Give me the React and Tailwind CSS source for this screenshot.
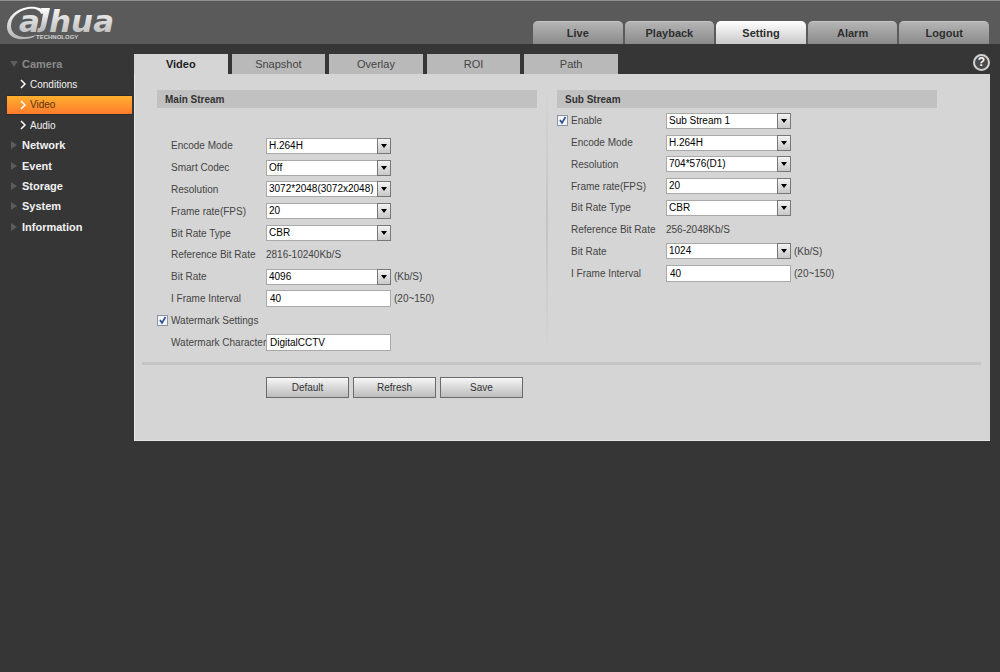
import React, { useState } from 'react';

const NAV = ['Live', 'Playback', 'Setting', 'Alarm', 'Logout'];
const TABS = ['Video', 'Snapshot', 'Overlay', 'ROI', 'Path'];
const CAMERA_PAGES = ['Conditions', 'Video', 'Audio'];
const MENUS = ['Network', 'Event', 'Storage', 'System', 'Information'];

const Logo = () => (
  <svg viewBox="0 0 124 43" width="124" height="43" role="img" aria-label="alhua Technology">
    <defs>
      <linearGradient id="metal" x1="0" y1="0" x2="0" y2="1">
        <stop offset="0" stopColor="#ffffff" />
        <stop offset="1" stopColor="#b4b4b4" />
      </linearGradient>
    </defs>
    <path
      d="M45 12C43 7 36 5 28 6C16 8 7 16 7 26C7 34 14 39 24 38C29 38 33 37 36 34C32 35 29 36 25 36C17 36 11 32 11 25C11 16 18 10 28 8C35 7 40 9 41 13Z"
      fill="url(#metal)"
    />
    <g
      fill="url(#metal)"
      fontFamily="DejaVu Sans, Liberation Sans, sans-serif"
      fontWeight="700"
      fontStyle="italic"
      fontSize="31"
    >
      <text x="19" y="31">a</text>
      <text x="49" y="31">hua</text>
    </g>
    <path d="M41 7H50L46 25C45 30 42 32 37 31L38 27C40 28 40 26 41 24L43 13Z" fill="url(#metal)" />
    <text x="36" y="38" fontSize="6" fontWeight="700" fill="#d2d2d2" fontFamily="Liberation Sans, Arial, sans-serif">
      TECHNOLOGY
    </text>
  </svg>
);

const Chevron = () => (
  <svg viewBox="0 0 6 10" width="6" height="10" fill="none" stroke="currentColor" strokeWidth="1.5">
    <path d="M1 1l4 4-4 4" />
  </svg>
);

const Triangle = ({ open }) => (
  <svg viewBox="0 0 8 8" width="8" height="8" fill="#5c5c5c">
    <path d={open ? 'M0 1h8L4 7z' : 'M1 0l6 4-6 4z'} />
  </svg>
);

const Row = ({ label, htmlFor, check, children }) => (
  <div className="flex items-center">
    <div className="flex w-[109px] shrink-0 items-center whitespace-nowrap">
      <span className="flex w-[14px] shrink-0 items-center">{check}</span>
      <label htmlFor={htmlFor}>{label}</label>
    </div>
    {children}
  </div>
);

const Check = ({ id }) => {
  const [on, setOn] = useState(true);
  return (
    <span className="relative block size-[11px]">
      <input
        id={id}
        type="checkbox"
        checked={on}
        onChange={() => setOn(!on)}
        className="block size-[11px] appearance-none border border-[#8a94a0] bg-[#f1f4f8]"
      />
      {on && (
        <svg
          viewBox="0 0 11 11"
          className="pointer-events-none absolute inset-0 size-[11px]"
          fill="none"
          stroke="#34508c"
          strokeWidth="1.7"
        >
          <path d="M3 5l2 3 3.500-6" />
        </svg>
      )}
    </span>
  );
};

const Select = ({ id, label, value }) => (
  <span className="relative block h-4 w-[125px] shrink-0">
    <select
      id={id}
      aria-label={label}
      defaultValue={value}
      className="block h-4 w-full appearance-none border border-[#a9a9a9] bg-white pl-[2px] text-[10px] leading-[14px] text-black"
    >
      <option>{value}</option>
    </select>
    <span className="pointer-events-none absolute inset-y-0 right-0 flex w-[14px] items-center justify-center border border-[#777] bg-linear-to-b from-[#f4f4f4] to-[#c8c8c8]">
      <svg viewBox="0 0 6 4" width="6" height="4">
        <path d="M0 0h6L3 4z" />
      </svg>
    </span>
  </span>
);

const TextBox = ({ id, value }) => (
  <input
    id={id}
    type="text"
    defaultValue={value}
    className="block h-[17px] w-[125px] shrink-0 border border-[#a9a9a9] bg-white px-[3px] text-[10px] leading-[15px] text-black"
  />
);

const Unit = ({ children }) => <span className="ml-[3px]">{children}</span>;

const Heading = ({ children }) => (
  <h2 className="h-[18px] bg-[#c1c1c1] pl-2 pt-px font-bold leading-[17px] text-[#333]">{children}</h2>
);

const MainStream = () => (
  <section className="max-w-[380px] flex-1">
    <Heading>Main Stream</Heading>
    <div className="mt-[27px] grid h-[218px] auto-rows-fr">
      <Row label="Encode Mode" htmlFor="m-enc"><Select id="m-enc" value="H.264H" /></Row>
      <Row label="Smart Codec" htmlFor="m-codec"><Select id="m-codec" value="Off" /></Row>
      <Row label="Resolution" htmlFor="m-res"><Select id="m-res" value="3072*2048(3072x2048)" /></Row>
      <Row label="Frame rate(FPS)" htmlFor="m-fps"><Select id="m-fps" value="20" /></Row>
      <Row label="Bit Rate Type" htmlFor="m-type"><Select id="m-type" value="CBR" /></Row>
      <Row label="Reference Bit Rate"><span>2816-10240Kb/S</span></Row>
      <Row label="Bit Rate" htmlFor="m-rate"><Select id="m-rate" value="4096" /><Unit>(Kb/S)</Unit></Row>
      <Row label="I Frame Interval" htmlFor="m-int"><TextBox id="m-int" value="40" /><Unit>(20~150)</Unit></Row>
      <Row label="Watermark Settings" htmlFor="m-wm" check={<Check id="m-wm" />} />
      <Row label="Watermark Character" htmlFor="m-char"><TextBox id="m-char" value="DigitalCCTV" /></Row>
    </div>
  </section>
);

const SubStream = () => (
  <section className="max-w-[380px] flex-1">
    <Heading>Sub Stream</Heading>
    <div className="mt-[2px] grid h-[174px] auto-rows-fr">
      <Row label="Enable" htmlFor="s-on" check={<Check id="s-on" />}>
        <Select id="s-stream" label="Sub stream" value="Sub Stream 1" />
      </Row>
      <Row label="Encode Mode" htmlFor="s-enc"><Select id="s-enc" value="H.264H" /></Row>
      <Row label="Resolution" htmlFor="s-res"><Select id="s-res" value="704*576(D1)" /></Row>
      <Row label="Frame rate(FPS)" htmlFor="s-fps"><Select id="s-fps" value="20" /></Row>
      <Row label="Bit Rate Type" htmlFor="s-type"><Select id="s-type" value="CBR" /></Row>
      <Row label="Reference Bit Rate"><span>256-2048Kb/S</span></Row>
      <Row label="Bit Rate" htmlFor="s-rate"><Select id="s-rate" value="1024" /><Unit>(Kb/S)</Unit></Row>
      <Row label="I Frame Interval" htmlFor="s-int"><TextBox id="s-int" value="40" /><Unit>(20~150)</Unit></Row>
    </div>
  </section>
);

const Sidebar = () => (
  <nav className="grid h-[183px] w-[134px] shrink-0 auto-rows-fr pl-[7px] pr-[2px] text-[11px] font-bold text-[#f2f2f2]">
    <button className="flex items-center gap-1 pl-[3px] text-[#8a8a8a]">
      <Triangle open />
      Camera
    </button>
    {CAMERA_PAGES.map((page) => (
      <a
        key={page}
        href={`#${page}`}
        className={`flex items-center gap-1 pl-[13px] text-[10px] font-normal ${
          page === 'Video'
            ? 'border-y border-[#2b2b2b] bg-linear-to-b from-[#ffb02e] to-[#ff7a2d] text-[#5a3010]'
            : ''
        }`}
      >
        <span className="text-white"><Chevron /></span>
        {page}
      </a>
    ))}
    {MENUS.map((menu) => (
      <button key={menu} className="flex items-center gap-1 pl-[3px]">
        <Triangle />
        {menu}
      </button>
    ))}
  </nav>
);

export default function App() {
  return (
    <div className="min-h-screen bg-[#363636] font-['Liberation_Sans',Arial,sans-serif] text-[10px] text-[#444]">
      <header className="flex h-11 items-end justify-between border-t border-[#8b8f8e] bg-[#5a5a5a] pr-[11px]">
        <Logo />
        <nav className="grid w-[456px] grid-cols-5 gap-[2px]">
          {NAV.map((item) => (
            <button
              key={item}
              className={`h-[23px] rounded-t-[5px] border-t text-[11px] font-bold text-[#2e2e2e] ${
                item === 'Setting'
                  ? 'border-white bg-linear-to-b from-[#fdfdfd] to-[#c9c9c9]'
                  : 'border-[#c6c6c6] bg-linear-to-b from-[#b4b4b4] to-[#8b8b8b]'
              }`}
            >
              {item}
            </button>
          ))}
        </nav>
      </header>

      <div className="flex pr-[10px] pt-[10px]">
        <Sidebar />
        <main className="min-w-0 flex-1">
          <div className="flex items-start justify-between">
            <div className="grid w-[484px] grid-cols-5 gap-1" role="tablist">
              {TABS.map((tab) => (
                <button
                  key={tab}
                  role="tab"
                  aria-selected={tab === 'Video'}
                  className={`h-5 text-[11px] ${
                    tab === 'Video' ? 'bg-[#d5d5d5] font-bold text-[#222]' : 'bg-[#b9b9b9] text-[#444]'
                  }`}
                >
                  {tab}
                </button>
              ))}
            </div>
            <button
              aria-label="Help"
              className="size-[17px] rounded-full border-2 border-[#d2d2d2] bg-[#4a4a4a] text-[12px] font-bold leading-[13px] text-white"
            >
              ?
            </button>
          </div>

          <div className="border-b border-l border-[#e6e6e6] bg-[#d5d5d5] pb-[42px] pl-[7px] pr-[9px] pt-4">
            <div className="flex pl-[15px]">
              <MainStream />
              <div className="mx-[9px] w-[2px] shrink-0 bg-linear-to-b from-[#d5d5d5] via-[#c3c3c3] to-[#d5d5d5]" />
              <SubStream />
            </div>
            <hr className="mt-[9px] h-[3px] border-0 bg-[#c5c5c5]" />
            <div className="mt-3 flex gap-1 pl-[124px]">
              {['Default', 'Refresh', 'Save'].map((action) => (
                <button
                  key={action}
                  className="h-[21px] w-[83px] border border-[#6a6a6a] bg-linear-to-b from-[#f6f6f6] to-[#bcbcbc] text-[#333]"
                >
                  {action}
                </button>
              ))}
            </div>
          </div>
        </main>
      </div>
    </div>
  );
}
